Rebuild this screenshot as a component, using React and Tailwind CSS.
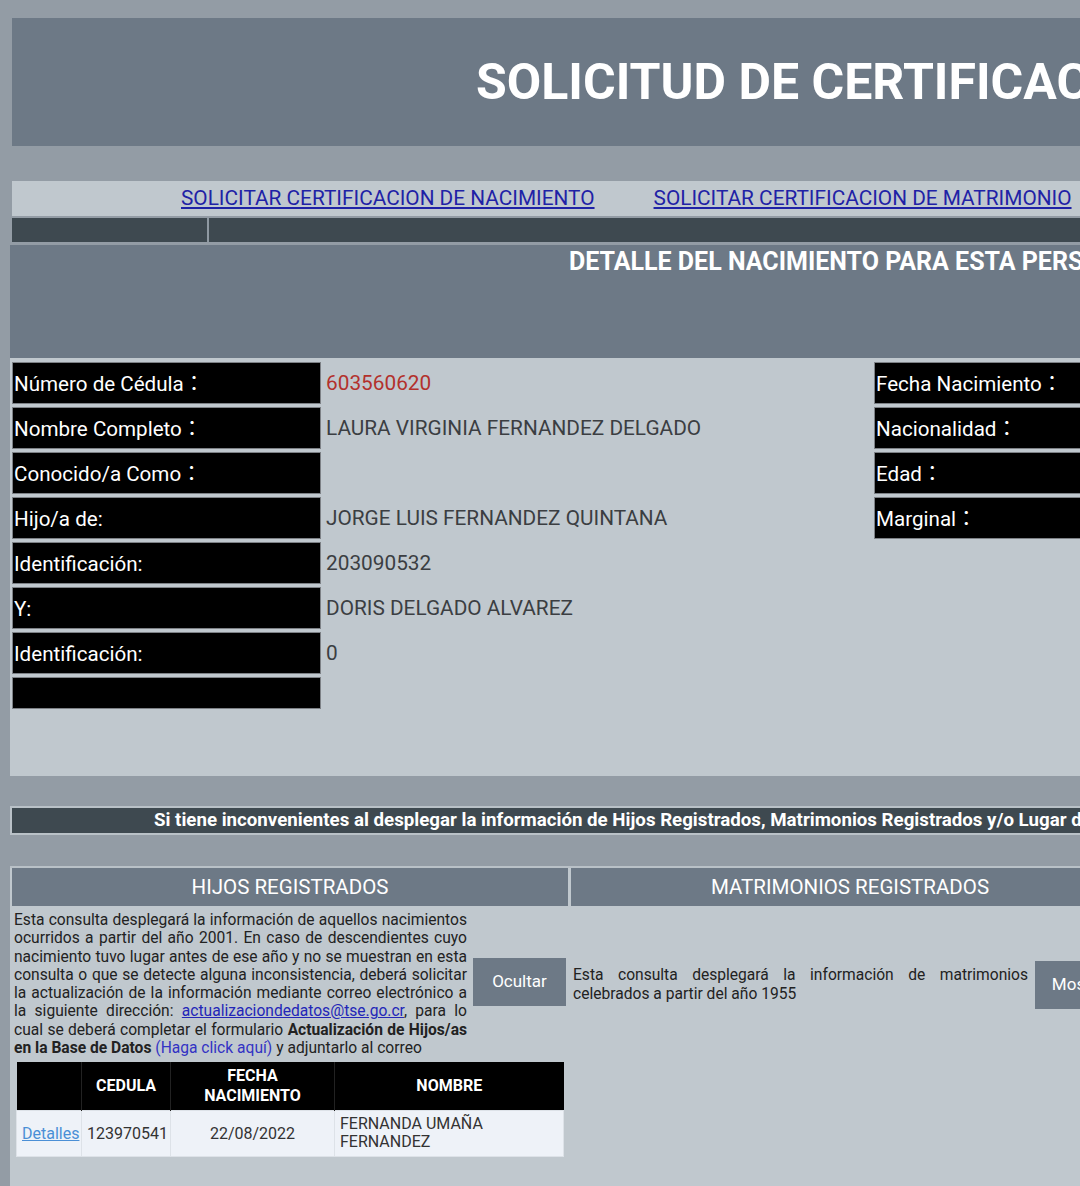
import React from "react";

const rowsLeft = [
  { label: "Número de Cédula：", value: "603560620", red: true },
  { label: "Nombre Completo：", value: "LAURA VIRGINIA FERNANDEZ DELGADO" },
  { label: "Conocido/a Como：", value: "" },
  { label: "Hijo/a de:", value: "JORGE LUIS FERNANDEZ QUINTANA" },
  { label: "Identificación:", value: "203090532" },
  { label: "Y:", value: "DORIS DELGADO ALVAREZ" },
  { label: "Identificación:", value: "0" },
];

const rowsRight = ["Fecha Nacimiento：", "Nacionalidad：", "Edad：", "Marginal："];

function Label({ children, short }) {
  return (
    <div
      className={`w-[309px] shrink-0 bg-black border border-[#7d8186] text-white text-[20.6px] pl-[1px] pt-[2px] flex items-center whitespace-nowrap ${
        short ? "h-[32px]" : "h-[42px]"
      }`}
    >
      {children}
    </div>
  );
}

export default function App() {
  return (
    <div className="w-[1080px] h-[1186px] overflow-hidden bg-[#939ca5] font-['Roboto','Noto_Sans_CJK_JP',sans-serif]">
      <div className="w-[1500px]">
        {/* title */}
        <div className="h-[18px]" />
        <div className="ml-[12px] h-[128px] bg-[#6d7986] flex items-center pl-[464px]">
          <h1 className="text-[50px] font-bold text-white whitespace-nowrap leading-none">
            SOLICITUD DE CERTIFICACIONES
          </h1>
        </div>
        <div className="h-[35px]" />

        {/* links */}
        <div className="ml-[12px] h-[35px] bg-[#c0c8ce] flex items-center pl-[169px] gap-[59px] text-[20.8px] text-[#1f22a6] whitespace-nowrap">
          <a href="#" className="underline">SOLICITAR CERTIFICACION DE NACIMIENTO</a>
          <a href="#" className="underline">SOLICITAR CERTIFICACION DE MATRIMONIO</a>
        </div>
        <div className="ml-[12px] mt-[2px] h-[24px] flex gap-[2px] bg-[#8f99a2]">
          <div className="w-[195px] bg-[#3e4950]" />
          <div className="flex-1 bg-[#3e4950]" />
        </div>

        {/* detalle */}
        <div className="ml-[10px] mt-[3px] h-[113px] bg-[#6d7986] pl-[559px] pt-[2px]">
          <h2 className="text-[25px] leading-[30px] font-bold text-white whitespace-nowrap">
            DETALLE DEL NACIMIENTO PARA ESTA PERSONA
          </h2>
        </div>
        <div className="ml-[10px] h-[418px] bg-[#c0c8ce] pt-[4px] pl-[2px] flex">
          <div className="w-[862px] flex flex-col gap-[3px]">
            {rowsLeft.map((r, i) => (
              <div key={i} className="flex items-center">
                <Label>{r.label}</Label>
                <div
                  className={`pl-[5px] pt-[2px] text-[20.8px] whitespace-nowrap ${
                    r.red ? "text-[#b3312c]" : "text-[#3b3e42]"
                  }`}
                >
                  {r.value}
                </div>
              </div>
            ))}
            <div className="flex">
              <Label short />
            </div>
          </div>
          <div className="flex flex-col gap-[3px]">
            {rowsRight.map((l, i) => (
              <div
                key={i}
                className="w-[400px] h-[42px] bg-black border border-[#7d8186] text-white text-[20.6px] pl-[1px] pt-[2px] flex items-center whitespace-nowrap"
              >
                {l}
              </div>
            ))}
          </div>
        </div>

        {/* aviso */}
        <div className="h-[30px]" />
        <div className="ml-[10px] h-[29px] bg-[#3e4950] border-2 border-[#b9c1c7] flex items-center pl-[142px] text-white font-bold text-[18.7px] whitespace-nowrap">
          Si tiene inconvenientes al desplegar la información de Hijos Registrados, Matrimonios Registrados y/o Lugar de Defunción
        </div>
        <div className="h-[31px]" />

        {/* hijos / matrimonios */}
        <div className="ml-[10px] h-[400px] bg-[#c0c8ce] border-t-2 border-[#b9c1c7] pl-[2px] flex gap-[3px]">
          <div className="w-[556px] flex flex-col">
            <div className="h-[38px] bg-[#6d7986] text-white text-[20.5px] flex items-center justify-center">
              HIJOS REGISTRADOS
            </div>
            <div className="flex items-center">
              <p className="w-[453px] ml-[2px] pt-[5px] text-[15.6px] leading-[18.3px] text-[#222] text-justify">
                Esta consulta desplegará la información de aquellos nacimientos ocurridos a partir del año 2001. En caso de descendientes cuyo nacimiento tuvo lugar antes de ese año y no se muestran en esta consulta o que se detecte alguna inconsistencia, deberá solicitar la actualización de la información mediante correo electrónico a la siguiente dirección:{" "}
                <a href="#" className="underline text-[#2326b8]">actualizaciondedatos@tse.go.cr</a>, para lo cual se deberá completar el formulario{" "}
                <b>Actualización de Hijos/as en la Base de Datos</b>{" "}
                <a href="#" className="text-[#3333c4]">(Haga click aquí)</a> y adjuntarlo al correo
              </p>
              <button className="ml-[6px] w-[93px] h-[48px] bg-[#6d7986] text-white text-[17px]">
                Ocultar
              </button>
            </div>
            <table className="mt-[5px] ml-[4px] w-[548px] border-collapse text-[16px]">
              <thead>
                <tr className="bg-black text-white font-bold h-[48px]">
                  <th className="w-[65px] border-r border-[#222]" />
                  <th className="w-[89px] border-r border-[#222] leading-[20px]">CEDULA</th>
                  <th className="w-[164px] border-r border-[#222] leading-[20px]">
                    FECHA
                    <br />
                    NACIMIENTO
                  </th>
                  <th className="leading-[20px]">NOMBRE</th>
                </tr>
              </thead>
              <tbody>
                <tr className="bg-[#eef2f8] h-[46px] text-[#333] leading-[19px]">
                  <td className="border border-[#dde2e8] pl-[5px]">
                    <a href="#" className="underline text-[#4a8fd6]">Detalles</a>
                  </td>
                  <td className="border border-[#dde2e8] pl-[5px]">123970541</td>
                  <td className="border border-[#dde2e8] text-center">22/08/2022</td>
                  <td className="border border-[#dde2e8] pl-[5px] leading-[18px]">
                    FERNANDA UMAÑA
                    <br />
                    FERNANDEZ
                  </td>
                </tr>
              </tbody>
            </table>
          </div>

          <div className="w-[558px] flex flex-col">
            <div className="h-[38px] bg-[#6d7986] text-white text-[20.5px] flex items-center justify-center">
              MATRIMONIOS REGISTRADOS
            </div>
            <div className="h-[157px] flex items-center">
              <p className="w-[455px] ml-[2px] text-[15.6px] leading-[18.3px] text-[#222] text-justify">
                Esta consulta desplegará la información de matrimonios celebrados a partir del año 1955
              </p>
              <button className="ml-[7px] w-[93px] h-[48px] bg-[#6d7986] text-white text-[17px]">
                Mostrar
              </button>
            </div>
          </div>
        </div>
      </div>
    </div>
  );
}
